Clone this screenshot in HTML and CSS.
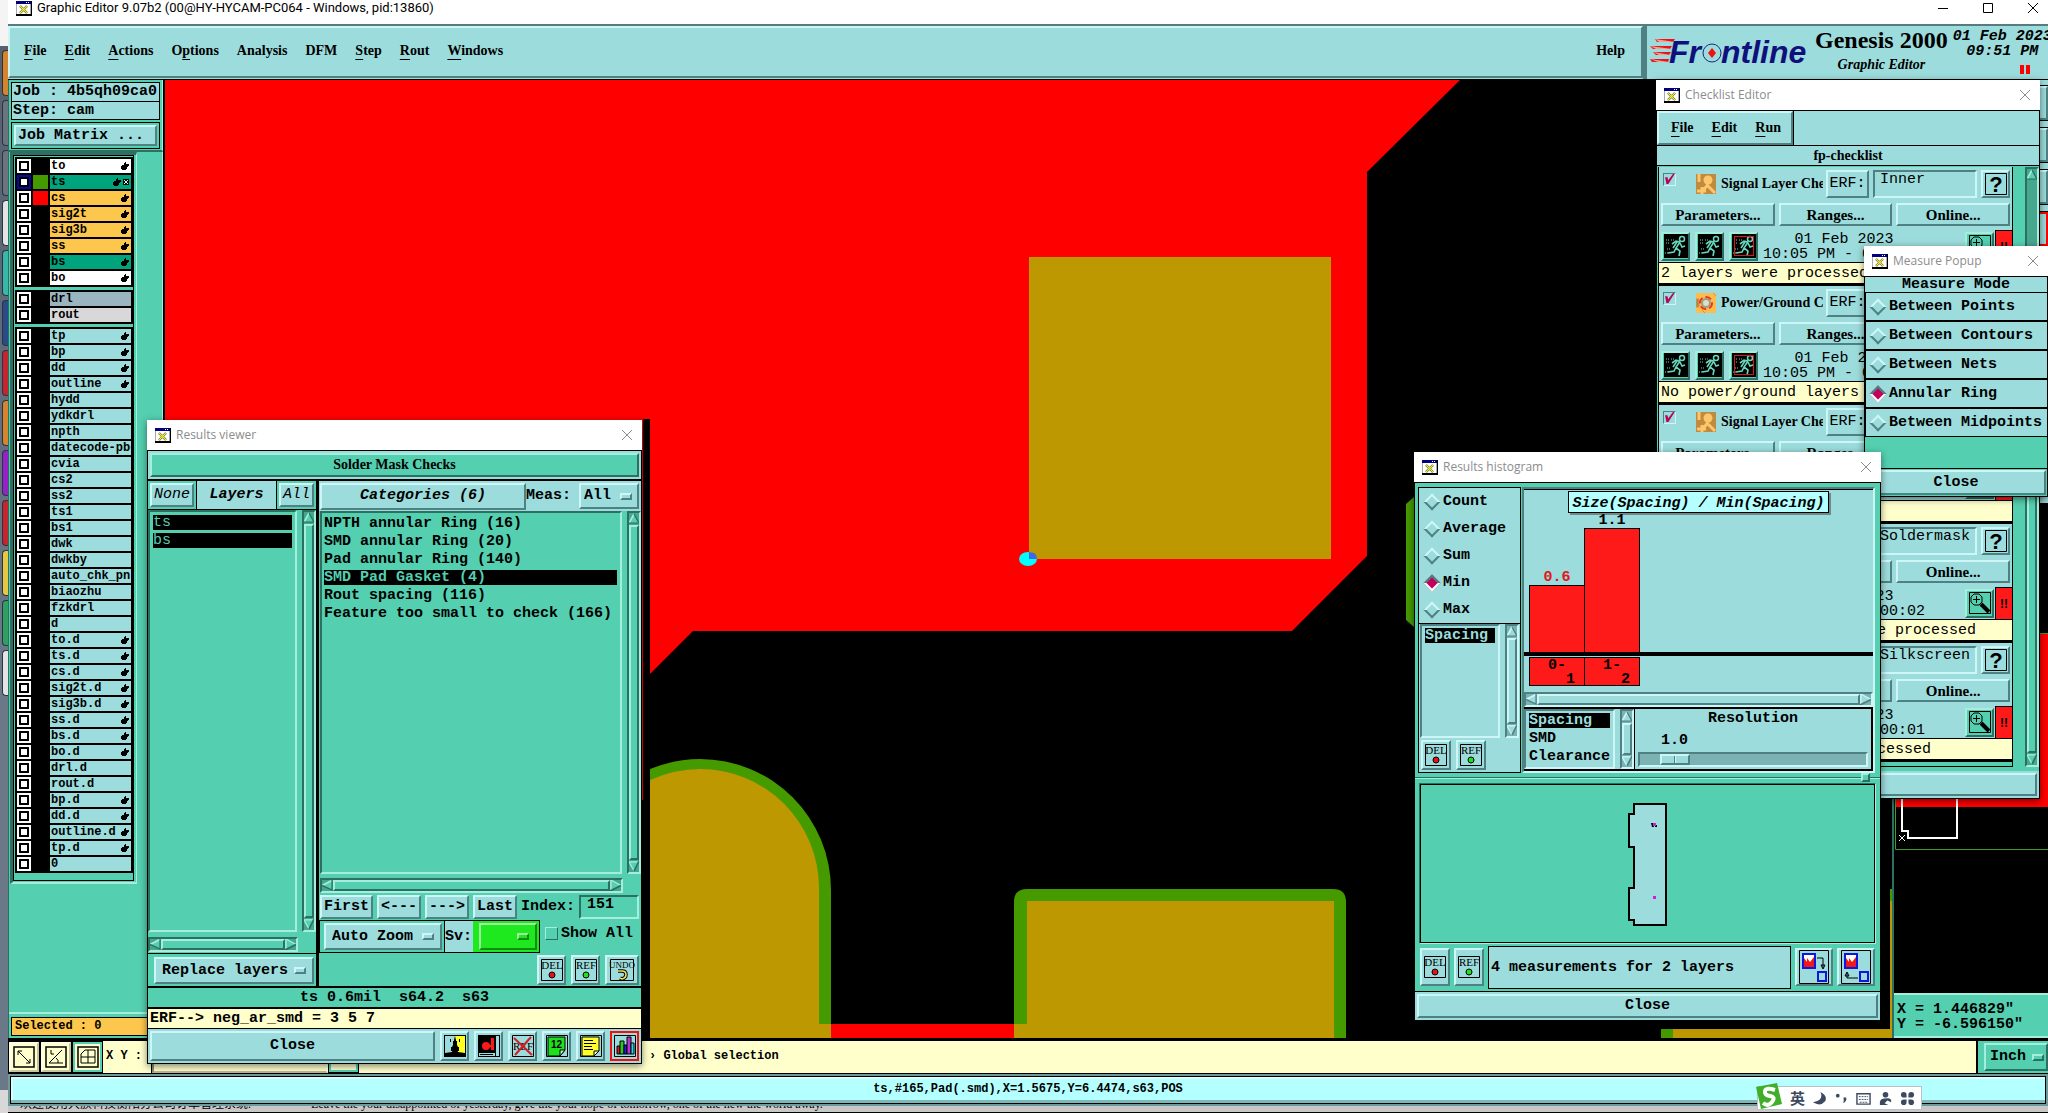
FILE: index.html
```html
<!DOCTYPE html>
<html lang="en">
<head>
	<meta charset="utf-8">
	<title>Graphic Editor</title>
	<link rel="stylesheet" href="styles.css">
</head>
<body>

<!-- shared icons -->
<svg class="defs">
	<symbol id="i-win" viewBox="0 0 16 15"><path d="M0 0h16v15H0z" fill="#000"/><path d="M0 0h15v13H0z" fill="#a8a8b0"/><path d="M1 3h13v10H1z" fill="#fff"/><path d="M0 0h15v3H0z" fill="#000080"/><path d="M10 1h1v1h-1zM12 1h1v1h-1z" fill="#fff"/><path d="M4 5l7 7M11 5l-7 7" stroke="#333" stroke-width="2.2"/><path d="M4 5l7 7M11 5l-7 7" stroke="#f2f22a" stroke-width="1.4"/></symbol>
	<symbol id="i-close" viewBox="0 0 12 12"><path d="M1 1l10 10M11 1L1 11" stroke="currentColor" fill="none"/></symbol>
	<symbol id="i-hand" viewBox="0 0 8 8"><path d="M4 0h1v2h3v2H7v1H6v2H5v1H1V7H0V4h1V3h2V1h1z"/></symbol>
	<symbol id="i-grid" viewBox="0 0 6 6"><path d="M0 0h6v6H0z"/><path d="M1 1h1v1H1zM4 1h1v1H4zM1 4h1v1H1zM4 4h1v1H4zM2 2h2v2H2z" fill="#cfe"/></symbol>
	<symbol id="i-up" viewBox="0 0 12 12"><path d="M6 0L12 12H0z" fill="var(--bg)"/><path d="M0 11L6 0" stroke="var(--hi)" stroke-width="2"/><path d="M6 0l6 11H0" stroke="var(--lo)" stroke-width="1.5" fill="none"/></symbol>
	<symbol id="i-down" viewBox="0 0 12 12"><path d="M0 0h12L6 12z" fill="var(--bg)"/><path d="M12 1H0l6 11" stroke="var(--hi)" stroke-width="1.5" fill="none"/><path d="M12 0L6 12" stroke="var(--lo)" stroke-width="2"/></symbol>
	<symbol id="i-left" viewBox="0 0 12 12"><path d="M12 0v12L0 6z" fill="var(--bg)"/><path d="M12 0L0 6" stroke="var(--hi)" stroke-width="2"/><path d="M0 6l11 5V0" stroke="var(--lo)" stroke-width="1.5" fill="none"/></symbol>
	<symbol id="i-right" viewBox="0 0 12 12"><path d="M0 0l12 6-12 6z" fill="var(--bg)"/><path d="M12 6L1 0v12" stroke="var(--hi)" stroke-width="1.5" fill="none"/><path d="M12 6L0 12" stroke="var(--lo)" stroke-width="2"/></symbol>
	<symbol id="i-del" viewBox="0 0 24 24"><path d="M1.500 1.500h21v21h-21z" fill="none" stroke="#000"/><text x="12" y="11" class="cap" text-anchor="middle">DEL</text><circle cx="12" cy="17" r="3" fill="#e8101c" stroke="#000"/></symbol>
	<symbol id="i-ref" viewBox="0 0 24 24"><path d="M1.500 1.500h21v21h-21z" fill="none" stroke="#000"/><text x="12" y="11" class="cap" text-anchor="middle">REF</text><circle cx="12" cy="17" r="3" fill="#1ee01e" stroke="#000"/></symbol>
	<symbol id="i-undo" viewBox="0 0 26 24"><path d="M1.500 1.500h23v21h-23z" fill="none" stroke="#000"/><text x="13" y="10" class="cap small" text-anchor="middle">UNDO</text><path d="M9 13h4q4 0 4 3.500t-4 4.500l-2-1" fill="none" stroke="#000" stroke-width="3.500"/><path d="M9 13h4q4 0 4 3.500t-4 4.500l-2-1" fill="none" stroke="#f0e060" stroke-width="1.600"/></symbol>
	<symbol id="i-face" viewBox="0 0 24 24"><path d="M1 1h22v22H1z" fill="#000"/><path d="M2 2h10l-1 4v3l-2 4 1 2-1 3-7 1z" fill="#9cdcdc"/><path d="M22 2H12l1 4v3l2 4-1 2 1 3 7 1z" fill="#ffff20"/><path d="M7 5h1v3H7zM16 5h1v3h-1zM10 7h4v6h2v4H8v-4h2z"/></symbol>
	<symbol id="i-dim" viewBox="0 0 24 24"><path d="M1 1h22v22H1z" fill="#000"/><path d="M2 19h16v3H2z" fill="#9cdcdc"/><path d="M19 2h3v20h-3z" fill="#9cdcdc"/><path d="M3 20.500h13" stroke="#000"/><circle cx="9" cy="12" r="4" fill="#ff1818"/><path d="M14 4h3v12h-3z" fill="#ff1818"/><path d="M10 11h4v2h-4z" fill="#ff1818"/></symbol>
	<symbol id="i-noref" viewBox="0 0 24 24"><path d="M1.500 1.500h21v21h-21z" fill="none" stroke="#000"/><text x="12" y="16" class="cap" text-anchor="middle">REF</text><path d="M3 4l18 17M20 3L4 21" stroke="#d41c24" stroke-width="2"/></symbol>
	<symbol id="i-num" viewBox="0 0 24 24"><path d="M1.500 1.500h21v21h-21z" fill="#9cdcdc" stroke="#000"/><path d="M3 3h17v13l-5 6H3z" fill="#1ee01e" stroke="#000"/><path d="M15 22v-6h5z" fill="#b8f8b8" stroke="#000"/><text x="6" y="14" class="num">12</text></symbol>
	<symbol id="i-note" viewBox="0 0 24 24"><path d="M1.500 1.500h21v21h-21z" fill="#9cdcdc" stroke="#000"/><path d="M3 3h17v14l-5 5H3z" fill="#ffff30" stroke="#000"/><path d="M15 22v-5h5z" fill="#ffffb0" stroke="#000"/><path d="M5 6.500h9M5 9.500h12M5 12.500h8M5 15.500h9" stroke="#000"/></symbol>
	<symbol id="i-hist" viewBox="0 0 24 24"><path d="M1.500 1.500h21v21h-21z" fill="#9cdcdc" stroke="#000"/><path d="M4 12h3v8H4z" fill="#e01818" stroke="#000"/><path d="M7 7h4v13H7z" fill="#28c828" stroke="#000"/><path d="M11 11h3v9h-3z" fill="#2020e0" stroke="#000"/><path d="M14 3h4v17h-4z" fill="#c030d0" stroke="#000"/><path d="M18 9h3v11h-3z" fill="#20d8e8" stroke="#000"/></symbol>
	<symbol id="i-run" viewBox="0 0 24 24"><path d="M0 0h24v24H0z" fill="#000"/><circle cx="18" cy="5" r="2.500" fill="none" stroke="#68d8bc" stroke-width="1.500"/><path d="M16 8l-4-1-4 3M16 8l-4 6 4 3-1 5M12 14l-2 4-6 1M16 9l2 4 3-1M13 8l-4 6" fill="none" stroke="#68d8bc" stroke-width="1.600"/><path d="M2 6h3M7 6h3M2 9h3M3 15h3M1 19h3" stroke="#68d8bc" stroke-dasharray="1 1"/></symbol>
	<symbol id="i-zoom" viewBox="0 0 24 24"><path d="M1.500 1.500h21v21h-21z" fill="#54cfb0" stroke="#000"/><path d="M6 3h5l3 3v5l-3 3H6l-3-3V6z" fill="none" stroke="#000"/><path d="M5 8.500h7M8.500 5v7" stroke="#000"/><path d="M13 13l8 8" stroke="#000" stroke-width="4"/></symbol>
	<symbol id="i-help" viewBox="0 0 24 24"><path d="M1.500 1.500h21v21h-21z" fill="none" stroke="#000"/><text x="12" y="20" class="q" text-anchor="middle">?</text></symbol>
	<symbol id="i-signal" viewBox="0 0 20 20"><path d="M0 0h20v20H0z" fill="#c08b3e"/><circle cx="12" cy="6" r="4.500" fill="#fdc66a"/><path d="M12 10l-2 3-3 3M12 12l7 7M3 0v8M6 13v7M1 17h9" stroke="#fdc66a" stroke-width="3" fill="none"/></symbol>
	<symbol id="i-power" viewBox="0 0 20 20"><path d="M0 0h20v20H0z" fill="#fdbb50"/><path d="M0 6h3v8H0zM17 0l3 3M6 17l3 3" fill="#a08868" stroke="#e09030"/><circle cx="10" cy="10" r="6" fill="none" stroke="#e83818" stroke-width="2" stroke-dasharray="6 3"/><circle cx="10" cy="10" r="4" fill="#e0dcc8" stroke="#98a088" stroke-width="2"/></symbol>
	<symbol id="i-tile" viewBox="0 0 30 34"><path d="M.5.5h29v33H.5z" fill="none" stroke="#000"/><path d="M4 4h12v14H4z" fill="#fff" stroke="#1414e0" stroke-width="2"/><path d="M5 8l3 4V8l3 4 4-5v10H5z" fill="#f01818"/><path d="M19 22h8v9h-8z" fill="none" stroke="#1414e0" stroke-width="2"/></symbol>
</svg>

<div class="strip">
	<span class="k-or"></span><span class="k-gr"></span><span class="k-gr"></span><span class="k-wh"></span><span class="k-te"></span><span class="k-bl"></span><span class="k-re"></span><span class="k-or"></span><span class="k-pu"></span><span class="k-re"></span><span class="k-ye"></span><span class="k-gn"></span><span class="k-wh"></span>
</div>

<div class="app">
	<header class="titlebar">
		<svg class="win-icon"><use href="#i-win"/></svg>
		<span>Graphic Editor 9.07b2 (00@HY-HYCAM-PC064 - Windows, pid:13860)</span>
		<span class="sysbuttons">
			<button aria-label="Minimize"><svg viewBox="0 0 12 12"><path d="M1 6.500h10" stroke="#000"/></svg></button>
			<button aria-label="Maximize"><svg viewBox="0 0 12 12"><path d="M1.500 1.500h9v9h-9z" stroke="#000" fill="none"/></svg></button>
			<button aria-label="Close"><svg viewBox="0 0 12 12"><use href="#i-close"/></svg></button>
		</span>
	</header>

	<div class="topbar blue">
		<nav class="menu">
			<button><u>F</u>ile</button><button><u>E</u>dit</button><button><u>A</u>ctions</button><button>O<u>p</u>tions</button><button>Analysis</button><button>DFM</button><button><u>S</u>tep</button><button><u>R</u>out</button><button><u>W</u>indows</button>
			<button class="help">Help</button>
		</nav>
		<div class="brand">
			<svg class="logo" viewBox="0 0 160 34">
				<path d="M5 6h20l-2 3H7zM0 13h22l-2 3H3zM3 19h18l-2 3H6zM0 26h19l-1 3H2z" fill="#e8141c"/>
				<path d="M5 6l20 3H9zM0 13l22 3H6zM3 19l18 3H9zM0 26l19 3H8z" fill="#f8a090"/>
				<g class="logo-text"><text x="19" y="30">Fr</text><text x="71" y="30">ntline</text></g>
				<circle cx="62" cy="20" r="9" fill="none" stroke="#182a80"/>
				<path d="M62 15l4 5-4 5-4-5z" fill="#f01010"/>
			</svg>
			<div class="product"><b>Genesis 2000</b><i>Graphic Editor</i></div>
			<div class="clock"><span>01 Feb 2023</span><span>09:51 PM</span><span class="pause"></span></div>
		</div>
	</div>

	<div class="workspace">
		<aside class="side green">
			<div class="jobinfo">
				<div class="job blue">Job : 4b5qh09ca0</div>
				<div class="job blue">Step: cam</div>
				<div class="matrix"><button class="btn blue">Job Matrix ...</button></div>
			</div>
			<div class="layerpane"><div class="layers" id="layers"></div></div>
			<div class="selected">Selected : 0</div>
		</aside>

		<main class="canvas">
			<svg viewBox="0 0 1727 958" preserveAspectRatio="xMinYMin slice">
				<path d="M0 0H1295L1202 92V476L1127 551H528L485 594V720H0z" fill="#f00"/>
				<path d="M478 339h7v620h-7z" fill="#000"/>
				<path d="M864 177h302v302H864z" fill="#be9800"/>
				<ellipse cx="863" cy="479" rx="9" ry="7" fill="#0ff"/><path d="M864 479v-7q8 0 8 7z" fill="#4169e1"/>
				<path d="M485 689Q510 679 535 679A131 131 0 0 1 666 810V944H485z" fill="#459a00"/>
				<path d="M485 700Q510 689 535 689A119 119 0 0 1 654 808V944H666V958H485z" fill="#be9800"/>
				<path d="M666 944h183v14H666z" fill="#f00"/>
				<path d="M849 958V822q0-13 13-13h306q13 0 13 13v136z" fill="#459a00"/>
				<path d="M862 821h307v137H849v-14h13z" fill="#be9800"/>
				<path d="M1241 424l8-7v130l-8-7z" fill="#459a00"/>
				<path d="M1496 949h12v9h-12zM1725 809h2v12h-2z" fill="#459a00"/>
				<path d="M1508 949h217V821h2v137h-219z" fill="#be9800"/>
			</svg>
		</main>

		<aside class="tools">
			<div class="toolbox blue"><button class="btn" aria-label="Zoom in"></button><button class="btn" aria-label="Zoom out"></button><button class="btn" aria-label="Pan"></button><button class="btn hot" aria-label="Stop"></button><button class="btn" aria-label="Snap"></button></div>
			<svg class="overview" viewBox="0 0 154 490" preserveAspectRatio="xMinYMax slice">
				<path d="M0 0h154v490H0z"/><path d="M2 130h152v174H2z" fill="#f00"/>
				<path d="M154 130.500H1.500V346.500H154" fill="none" stroke="#3f9a28"/>
				<path d="M8 240v88h6v7h49v-95" fill="none" stroke="#fff" stroke-width="2"/>
				<path d="M5 332l6 6M11 332l-6 6" stroke="#fff"/>
			</svg>
			<div class="coords green"><span>X = 1.446829"</span><span>Y = -6.596150"</span></div>
		</aside>
	</div>

	<div class="cmdbar">
		<button class="tool" aria-label="Distance"><svg viewBox="0 0 22 22"><path d="M1 1h20v20H1z" fill="none" stroke="#000" stroke-width="1.500"/><path d="M5 5l12 12M5 9V5h4M17 13v4h-4" stroke="#000" fill="none"/></svg></button>
		<button class="tool" aria-label="Angle"><svg viewBox="0 0 22 22"><path d="M1 1h20v20H1z" fill="none" stroke="#000" stroke-width="1.500"/><path d="M17 4L4 17h14M6 4v4h3M11 12q3 2 2 5" stroke="#000" fill="none"/></svg></button>
		<button class="tool on" aria-label="Grid"><svg viewBox="0 0 22 22"><path d="M1 1h20v20H1z" fill="none" stroke="#000" stroke-width="1.500"/><path d="M4 17V8l4-4h10v13zM4 11h14M11 4v13" stroke="#000" fill="none"/></svg></button>
		<label for="xy">X Y :</label>
		<input id="xy" type="text">
		<button class="tool on" aria-label="Go"></button>
		<span class="hint">› Global selection</span>
		<span class="units green"><span class="opt"><select aria-label="Units"><option>Inch</option></select></span></span>
	</div>
	<div class="statusbar"><p>ts,#165,Pad(.smd),X=1.5675,Y=6.4474,s63,POS</p></div>
	<div class="behind"><span>欢迎使用大族科技衡阳分公司订单管理系统.</span><span>Leave the your disappointed of yesterday, give the your hope of tomorrow, one of the new the world away.</span></div>
</div>

<!-- results viewer -->
<section class="win viewer">
	<div class="wintitle"><svg class="win-icon"><use href="#i-win"/></svg><span>Results viewer</span><button aria-label="Close"><svg><use href="#i-close"/></svg></button></div>
	<div class="winbody green">
		<div class="checkname blue"><div class="btn green">Solder Mask Checks</div></div>
		<div class="panes">
			<div class="pane-l">
				<div class="lhead"><span><button class="btn blue">None</button></span><b class="blue">Layers</b><span><button class="btn blue">All</button></span></div>
				<div class="listrow">
					<ul class="list narrow"><li class="sel">ts</li><li class="sel">bs</li></ul>
					<div class="vbar"><svg><use href="#i-up"/></svg><i></i><svg><use href="#i-down"/></svg></div>
				</div>
				<div class="hbar"><svg><use href="#i-left"/></svg><i></i><svg><use href="#i-right"/></svg></div>
				<div class="replace"><span class="opt blue"><select aria-label="Replace mode"><option>Replace layers</option></select></span></div>
			</div>
			<div class="pane-r">
				<div class="rhead blue"><button class="btn">Categories (6)</button><label for="meas">Meas:</label><span class="opt"><select id="meas"><option>All</option></select></span></div>
				<div class="listrow">
					<ul class="list"><li>NPTH annular Ring (16)</li><li>SMD annular Ring (20)</li><li>Pad annular Ring (140)</li><li class="sel">SMD Pad Gasket (4)</li><li>Rout spacing (116)</li><li>Feature too small to check (166)</li></ul>
					<div class="vbar"><svg><use href="#i-up"/></svg><i></i><svg><use href="#i-down"/></svg></div>
				</div>
				<div class="hbar"><svg><use href="#i-left"/></svg><i></i><svg><use href="#i-right"/></svg></div>
				<div class="navrow"><button class="btn blue first">First</button><button class="btn blue">&lt;---</button><button class="btn blue">---&gt;</button><button class="btn blue">Last</button><label for="idx">Index:</label><input id="idx" type="text" value="151"></div>
				<div class="zoomrow">
					<div class="zoombox"><span class="opt blue"><select aria-label="Zoom mode"><option>Auto Zoom</option></select></span><label class="blue" for="sv">Sv:</label><div class="svbox"><span class="opt"><select id="sv"><option></option></select></span></div></div>
					<label class="showall"><input type="checkbox">Show All</label>
				</div>
				<div class="iconrow blue"><button class="btn" aria-label="Delete"><svg><use href="#i-del"/></svg></button><button class="btn" aria-label="Reference"><svg><use href="#i-ref"/></svg></button><button class="btn" aria-label="Undo"><svg class="wide"><use href="#i-undo"/></svg></button></div>
			</div>
		</div>
		<div class="measline"><pre>ts 0.6mil  s64.2  s63</pre></div>
		<div class="erfline">ERF--&gt; neg_ar_smd = 3 5 7</div>
		<div class="footer blue">
			<button class="btn grow">Close</button>
			<button class="btn" aria-label="Compare"><svg><use href="#i-face"/></svg></button><button class="btn" aria-label="Measure"><svg><use href="#i-dim"/></svg></button><button class="btn" aria-label="No reference"><svg><use href="#i-noref"/></svg></button><button class="btn" aria-label="Numbers"><svg><use href="#i-num"/></svg></button><button class="btn" aria-label="Notes"><svg><use href="#i-note"/></svg></button><button class="btn hot" aria-label="Histogram"><svg><use href="#i-hist"/></svg></button>
		</div>
	</div>
</section>

<!-- checklist editor -->
<section class="win checklist">
	<div class="wintitle"><svg class="win-icon"><use href="#i-win"/></svg><span>Checklist Editor</span><button aria-label="Close"><svg><use href="#i-close"/></svg></button></div>
	<div class="winbody blue">
		<nav class="menu"><button><u>F</u>ile</button><button><u>E</u>dit</button><button><u>R</u>un</button></nav>
		<h2>fp-checklist</h2>
		<div class="checks green">
			<div class="checkitems blue" id="checks"></div>
			<div class="vbar green"><svg><use href="#i-up"/></svg><i></i><svg><use href="#i-down"/></svg></div>
		</div>
		<div class="footer"><button class="btn grow" aria-label="Close"></button></div>
	</div>
</section>

<!-- measure popup -->
<section class="win measure">
	<div class="wintitle"><svg class="win-icon"><use href="#i-win"/></svg><span>Measure Popup</span><button aria-label="Close"><svg><use href="#i-close"/></svg></button></div>
	<div class="winbody green">
		<div class="modes blue">
			<h3>Measure Mode</h3>
			<label><input type="radio" name="mode">Between Points</label>
			<label><input type="radio" name="mode">Between Contours</label>
			<label><input type="radio" name="mode">Between Nets</label>
			<label><input type="radio" name="mode" checked>Annular Ring</label>
			<label><input type="radio" name="mode">Between Midpoints</label>
		</div>
		<div class="popclose"><button class="btn blue">Close</button></div>
	</div>
</section>

<!-- results histogram -->
<section class="win histogram">
	<div class="wintitle"><svg class="win-icon"><use href="#i-win"/></svg><span>Results histogram</span><button aria-label="Close"><svg><use href="#i-close"/></svg></button></div>
	<div class="winbody green">
		<div class="hmain">
			<div class="stats blue">
				<div class="radios">
					<label><input type="radio" name="stat">Count</label>
					<label><input type="radio" name="stat">Average</label>
					<label><input type="radio" name="stat">Sum</label>
					<label><input type="radio" name="stat" checked>Min</label>
					<label><input type="radio" name="stat">Max</label>
				</div>
				<div class="listrow"><ul class="list"><li class="sel">Spacing</li></ul><div class="vbar"><svg><use href="#i-up"/></svg><i></i><svg><use href="#i-down"/></svg></div></div>
				<div class="iconrow"><button class="btn" aria-label="Delete"><svg><use href="#i-del"/></svg></button><button class="btn" aria-label="Reference"><svg><use href="#i-ref"/></svg></button></div>
			</div>
			<div class="chartpane blue">
				<div class="plot">
					<div class="charttitle">Size(Spacing) / Min(Spacing)</div>
					<div class="bars"><div class="bar low" style="height:67px"><span>0.6</span></div><div class="bar" style="height:124px"><span>1.1</span></div></div>
				</div>
				<div class="ticks"><pre>0-
  1</pre><pre>1-
  2</pre></div>
				<div class="hbar"><svg><use href="#i-left"/></svg><i></i><svg><use href="#i-right"/></svg></div>
				<div class="chartfoot">
					<div class="listrow"><ul class="list"><li class="sel">Spacing</li><li>SMD</li><li>Clearance</li></ul><div class="vbar"><svg><use href="#i-up"/></svg><i></i><svg><use href="#i-down"/></svg></div></div>
					<div class="resolution"><label for="res">Resolution</label><output for="res">1.0</output><input id="res" type="range" min="0" max="10" value="1"></div>
				</div>
			</div>
		</div>
		<div class="sash"><i></i></div>
		<div class="board">
			<svg viewBox="0 0 40 123"><path d="M6 1h32v121H6v-5H1V85h5V44H1V11h5z" fill="#9cdcdc" stroke="#000" stroke-width="2"/><path d="M23 20h3v4h-2zM27 22h2v2h-2z"/><path d="M25 20h3v3h-3z" fill="#d020d0"/><path d="M25 93h3v3h-3z" fill="#d020d0"/></svg>
		</div>
		<div class="boardfoot blue">
			<button class="btn" aria-label="Delete"><svg><use href="#i-del"/></svg></button>
			<button class="btn" aria-label="Reference"><svg><use href="#i-ref"/></svg></button>
			<div class="summary">4 measurements for 2 layers</div>
			<button class="btn" aria-label="Send down"><svg class="tile" viewBox="0 0 30 34"><use href="#i-tile"/><path d="M18 8h6v10M22 15l2 4 2-4z" fill="none" stroke="#000"/></svg></button>
			<button class="btn" aria-label="Send back"><svg class="tile" viewBox="0 0 30 34"><use href="#i-tile"/><path d="M17 28H6v-5M4 26l2-4 2 4z" fill="none" stroke="#000"/></svg></button>
		</div>
		<div class="footer blue"><button class="btn grow">Close</button></div>
	</div>
</section>

<!-- input method bar -->
<div class="ime">
	<svg class="sogou" viewBox="0 0 28 28"><path d="M1 5L22 1l5 21L6 27z" fill="#3fae29"/><path d="M20 8q-9-3-10 1t5 5 2 6-9 1" fill="none" stroke="#fff" stroke-width="4"/></svg>
	<span>英</span>
	<svg viewBox="0 0 16 16"><path d="M9 1q4 9-8 11 8 5 13-1 3-6-5-10z"/></svg>
	<svg viewBox="0 0 16 16"><circle cx="4" cy="5" r="2"/><path d="M10 7h3q1 4-3 6 1-3 0-6z"/></svg>
	<svg viewBox="0 0 16 16"><path d="M1 3h14v11H1z" fill="none" stroke="#3c4a60" stroke-width="1.500"/><path d="M3 6h10M3 9h10M4 12h8" stroke="#3c4a60" stroke-dasharray="2 1"/></svg>
	<svg viewBox="0 0 16 16"><circle cx="8" cy="4" r="3"/><path d="M2 15q-1-8 6-7 7-1 6 4l-4-2-3 3 4 2z"/></svg>
	<svg viewBox="0 0 16 16"><path d="M1 4q0-3 3-3t3 3v3H4Q1 7 1 4zM9 7V4q0-3 3-3t3 3-3 3zM1 12q0-3 3-3h3v3q0 3-3 3t-3-3zM9 9h3q3 0 3 3t-3 3-3-3z"/></svg>
</div>

<script src="script.js"></script>
</body>
</html>
```

FILE: styles.css
```css
*, *::before, *::after {
	box-sizing: border-box;
}
html, body {
	height: 100%;
	margin: 0;
	overflow: hidden;
}
body {
	display: flex;
	position: relative;
	background: #6b7888;
	color: #000;
	font: bold 15px/18px "Liberation Mono", monospace;
}
button, input, select {
	font: inherit;
	color: inherit;
	margin: 0;
	padding: 0;
	border: 0;
	background: none;
	appearance: none;
	border-radius: 0;
}
svg {
	display: block;
}
h2, h3, p, pre, ul {
	margin: 0;
	padding: 0;
	font: inherit;
}
ul {
	list-style: none;
}
.defs {
	display: none;
}
.cap {
	font: 11px "Liberation Serif", serif;
}
.cap.small {
	font-size: 9px;
}
.num {
	font: bold 10px "Liberation Sans", sans-serif;
}
.q {
	font: bold 22px "Liberation Sans", sans-serif;
}

/* motif palettes */
.blue {
	--bg: #9cdcdc;
	--hi: #cdf6f6;
	--lo: #4f8082;
	--tr: #7cb2b3;
	background-color: #9cdcdc;
}
.green {
	--bg: #54cfb0;
	--hi: #a4eedb;
	--lo: #2b7060;
	--tr: #46a68e;
	background-color: #54cfb0;
}
.btn {
	display: flex;
	align-items: center;
	justify-content: center;
	background: var(--bg);
	border: 2px solid;
	border-color: var(--hi) var(--lo) var(--lo) var(--hi);
	white-space: nowrap;
}
.btn svg {
	width: 24px;
	height: 24px;
	flex: none;
}

/* strip of icons at the screen edge */
.strip {
	flex: 0 0 8px;
	display: flex;
	flex-direction: column;
	gap: 4px;
	padding: 50px 0 0 2px;
	background: linear-gradient(#f4f4f4 46px, #56616e 46px, #6b7888 60%, #6b7888 1090px, #d8d8d8 1090px);
}
.strip span {
	height: 46px;
	border: 1px solid #2b3440;
	border-right: 0;
	border-radius: 4px 0 0 4px;
}
.k-or { background: #d8842c; }
.k-gr { background: #6c7480; }
.k-wh { background: #e4e4e4; }
.k-te { background: #38b8a8; }
.k-bl { background: #2c4a88; }
.k-re { background: #c82430; }
.k-pu { background: #9820c8; }
.k-ye { background: #e8c840; }
.k-gn { background: #30a060; }

.app {
	flex: 1;
	min-width: 0;
	display: flex;
	flex-direction: column;
	overflow: hidden;
}
.titlebar {
	flex: 0 0 24px;
	display: flex;
	align-items: center;
	gap: 5px;
	padding: 0 9px 8px 8px;
	background: #fff;
	font: 13px/16px Roboto, sans-serif;
}
.win-icon {
	width: 16px;
	height: 15px;
	flex: none;
}
.sysbuttons {
	display: flex;
	gap: 33px;
	margin-left: auto;
}
.sysbuttons svg {
	width: 12px;
	height: 12px;
}
.topbar {
	flex: 0 0 56px;
	display: flex;
	border-top: 2px solid #567c7e;
	border-bottom: 1px solid #000;
}
.menu {
	display: flex;
	align-items: center;
	gap: 18px;
	font: bold 14px/18px "Liberation Serif", serif;
}
.menu u {
	text-decoration: underline;
	text-underline-offset: 4px;
}
.topbar .menu {
	flex: 1;
	padding: 0 16px 2px 14px;
	border: 2px solid;
	border-color: var(--hi) var(--lo) var(--lo) var(--hi);
	margin-bottom: 1px;
}
.topbar .help {
	margin-left: auto;
}
.brand {
	flex: 0 0 405px;
	display: flex;
	gap: 5px;
	padding: 2px 0 0 3px;
	border-left: 4px solid var(--lo);
	overflow: hidden;
}
.logo {
	width: 160px;
	height: 34px;
	margin-top: 5px;
	flex: none;
}
.logo-text {
	font: italic bold 32px "Liberation Sans", sans-serif;
	fill: #10107c;
}
.product {
	display: flex;
	flex-direction: column;
	align-items: center;
	font: bold 24px/24px "Liberation Serif", serif;
	white-space: nowrap;
}
.product i {
	font-size: 14px;
	line-height: 26px;
}
.clock {
	display: flex;
	flex-direction: column;
	flex: none;
	align-items: center;
	padding-top: 1px;
	font: italic bold 15px/15px "Liberation Mono", monospace;
}
.pause {
	width: 10px;
	height: 9px;
	margin: 6px 0 0 46px;
	border: solid #f00;
	border-width: 0 4px;
}

.workspace {
	flex: 1;
	min-height: 0;
	display: flex;
	border-bottom: 3px solid #000;
}
.side {
	flex: 0 0 157px;
	display: flex;
	flex-direction: column;
	border-right: 2px solid #000;
	border-left: 1px solid #2b7060;
}
.jobinfo {
	padding: 2px 2px 1px;
	border-right: 1px solid var(--hi);
	border-bottom: 2px solid var(--lo);
}
.job {
	height: 20px;
	padding-left: 1px;
	border: 1px solid #000;
	white-space: nowrap;
	overflow: hidden;
}
.job + .job {
	height: 19px;
	margin-top: -1px;
}
.matrix {
	margin-top: 2px;
	padding: 2px;
	border: 1px solid #000;
}
.matrix .btn {
	width: 100%;
	height: 21px;
	justify-content: flex-start;
	padding-left: 2px;
}
.layerpane {
	flex: 1;
	min-height: 0;
	padding-left: 1px;
	border-right: 1px solid var(--hi);
	border-bottom: 2px solid var(--hi);
}
.layers {
	width: 127px;
	display: flex;
	flex-direction: column;
	gap: 3px;
	padding: 2px 3px 9px 2px;
	border: solid;
	border-width: 3px 1px 2px 3px;
	border-color: var(--lo) var(--hi) var(--hi) var(--lo);
	outline: 1px solid #000;
	outline-offset: -4px;
}
.group {
	display: flex;
	flex-direction: column;
	gap: 2px;
	padding: 2px;
	background: #000;
}
.layer {
	display: flex;
	gap: 2px;
	height: 14px;
	font: bold 12px/14px "Liberation Mono", monospace;
}
.layer input {
	width: 14px;
	height: 14px;
	background: #fff;
	border: 3px solid #fff;
	outline: 2px solid #000;
	outline-offset: -4px;
}
.layer input:checked {
	border-color: #0808a0;
}
.swatch {
	width: 15px;
}
.lname {
	flex: 1;
	min-width: 0;
	display: flex;
	align-items: center;
	padding-left: 1px;
	overflow: hidden;
	white-space: nowrap;
	background: #9cdcdc;
}
.lname span {
	flex: 1;
	min-width: 0;
}
.lname svg {
	width: 8px;
	height: 8px;
	margin-right: 2px;
	flex: none;
}
.lname .g {
	width: 6px;
	height: 6px;
}
.c-wh { background: #fff; }
.c-gr { background: #00a47c; }
.c-or { background: #fdc64c; }
.c-dr { background: #9ab4c0; }
.c-ro { background: #d8d8d8; }
.selected {
	height: 19px;
	margin: 3px 0 2px 2px;
	padding-left: 3px;
	border: 1px solid #000;
	background: #fdc64c;
	font: bold 12px/17px "Liberation Mono", monospace;
}
.canvas {
	flex: 1;
	min-width: 0;
	background: #000;
}
.canvas svg {
	width: 100%;
	height: 100%;
}
.tools {
	flex: 0 0 156px;
	display: flex;
	flex-direction: column;
	border-left: 2px solid #2b7060;
}
.toolbox {
	flex: 0 0 423px;
	display: flex;
	flex-direction: column;
	align-items: flex-end;
	gap: 8px;
	padding-top: 6px;
}
.toolbox .btn {
	width: 40px;
	height: 34px;
	outline: 1px solid #000;
}
.toolbox .hot {
	border-color: #f00;
}
.overview {
	flex: 1;
	min-height: 0;
	width: 100%;
}
.coords {
	flex: 0 0 45px;
	display: flex;
	flex-direction: column;
	padding: 7px 0 0 3px;
	border-top: 2px solid var(--hi);
	border-bottom: 2px solid var(--hi);
	line-height: 15px;
}

.cmdbar {
	flex: 0 0 33px;
	display: flex;
	align-items: stretch;
	background: #ffffcc;
	border-bottom: 1px solid #000;
	font: bold 12px/18px "Liberation Mono", monospace;
}
.tool {
	width: 32px;
	display: flex;
	align-items: center;
	justify-content: center;
	background: #ffffcc;
	border: 3px solid #d2d0a4;
	border-color: #ffffe8 #c8c69c #c8c69c #ffffe8;
	outline: 1px solid #000;
	outline-offset: -1px;
}
.tool.on {
	width: 31px;
	border: 3px solid #54cfb0;
}
.tool svg {
	width: 22px;
	height: 22px;
}
.cmdbar label, .hint {
	line-height: 30px;
}
.cmdbar label {
	padding: 0 10px 0 3px;
}
.cmdbar input {
	width: 176px;
	border: 2px solid;
	border-color: #8c8c70 #ffffe8 #b8b690 #8c8c70;
	outline: 1px solid #000;
}
.hint {
	padding-left: 290px;
}
.units {
	width: 72px;
	margin-left: auto;
	padding: 2px 0 2px 6px;
	border-left: 2px solid #000;
	font-size: 15px;
}
.units .opt {
	padding: 0 2px 0 4px;
}
.opt {
	display: flex;
	align-items: center;
	height: 100%;
	padding: 0 6px;
	background: var(--bg);
	border: 2px solid;
	border-color: var(--hi) var(--lo) var(--lo) var(--hi);
}
.opt select {
	flex: 1;
	min-width: 0;
	line-height: 18px;
}
.opt::after {
	content: "";
	width: 12px;
	height: 7px;
	border: 2px solid;
	border-color: var(--hi) var(--lo) var(--lo) var(--hi);
}
.statusbar {
	flex: 0 0 32px;
	padding: 2px;
	background: #6f9a9c;
}
.statusbar p {
	height: 28px;
	background: #b4ffff;
	border: 1px solid #000;
	box-shadow: inset 0 -3px 0 #7cb8b8, inset 2px 2px 0 #dcffff;
	font: bold 12px/25px "Liberation Mono", monospace;
	text-align: center;
}
.behind {
	flex: 0 0 7px;
	display: flex;
	align-items: flex-end;
	gap: 60px;
	padding: 0 12px 2px;
	overflow: hidden;
	background: #c8c8c8;
	border-bottom: 1px solid #000;
	font: 12px/12px "Liberation Serif", "Noto Sans CJK SC", serif;
	white-space: nowrap;
}

/* floating windows */
.win {
	position: absolute;
	display: flex;
	flex-direction: column;
	box-shadow: 0 2px 7px rgba(0, 0, 0, 0.5);
}
.wintitle {
	flex: 0 0 30px;
	display: flex;
	align-items: center;
	gap: 5px;
	padding: 0 9px 0 8px;
	background: #fff;
	color: #8c8c8c;
	font: 12px/16px "Open Sans", sans-serif;
}
.wintitle button {
	margin-left: auto;
}
.wintitle button svg {
	width: 12px;
	height: 12px;
}
.winbody {
	flex: 1;
	min-height: 0;
	display: flex;
	flex-direction: column;
	border: 1px solid #000;
}
.footer {
	display: flex;
	gap: 5px;
	padding: 2px;
}
.grow {
	flex: 1;
}

/* lists and scroll bars */
.listrow {
	flex: 1;
	min-height: 0;
	display: flex;
	gap: 5px;
}
.list {
	flex: 1;
	min-width: 0;
	display: flex;
	flex-direction: column;
	gap: 3px;
	padding: 3px;
	border: 2px solid;
	border-color: var(--lo) var(--hi) var(--hi) var(--lo);
	overflow: hidden;
}
.list li {
	height: 15px;
	line-height: 15px;
	white-space: nowrap;
}
.list .sel {
	background: #000;
	color: var(--bg);
}
.list.narrow .sel {
	font-weight: normal;
}
.vbar, .hbar {
	display: flex;
	flex: none;
	border: 2px solid;
	border-color: var(--lo) var(--hi) var(--hi) var(--lo);
	background: var(--tr);
}
.vbar {
	flex-direction: column;
	width: 14px;
}
.hbar {
	height: 15px;
}
.hbar svg {
	width: 11px;
	height: 11px;
	flex: none;
}
.vbar svg {
	width: 10px;
	height: 12px;
	flex: none;
}
.vbar i, .hbar i {
	flex: 1;
	background: var(--bg);
	border: 2px solid;
	border-color: var(--hi) var(--lo) var(--lo) var(--hi);
}

/* results viewer */
.viewer {
	left: 147px;
	top: 420px;
	width: 495px;
	height: 644px;
}
.checkname {
	padding: 2px;
	border-bottom: 2px solid #000;
}
.checkname .btn {
	height: 24px;
	font: bold 14px/18px "Liberation Serif", serif;
}
.panes {
	flex: 1;
	min-height: 0;
	display: flex;
}
.pane-l {
	flex: 0 0 171px;
	display: flex;
	flex-direction: column;
	border-right: 3px solid #000;
}
.lhead {
	display: flex;
	height: 29px;
	border-bottom: 1px solid #000;
	font-style: italic;
}
.lhead span {
	padding: 2px;
}
.lhead .btn {
	height: 24px;
	padding: 0 2px;
	font-weight: normal;
	font-style: italic;
}
.lhead b {
	flex: 1;
	border: solid #000;
	border-width: 0 1px;
	line-height: 28px;
	text-align: center;
}
.pane-l .hbar {
	margin: 5px 18px 1px 0;
}
.replace {
	height: 33px;
	padding: 3px 2px 2px 6px;
	border-top: 1px solid #000;
}
.pane-r {
	flex: 1;
	min-width: 0;
	display: flex;
	flex-direction: column;
}
.pane-r .listrow, .pane-r .hbar, .pane-r .navrow {
	margin-left: 1px;
}
.rhead {
	display: flex;
	align-items: center;
	height: 30px;
	padding: 1px 2px 1px 1px;
}
.rhead .btn {
	width: 206px;
	height: 27px;
	font-style: italic;
}
.rhead .opt {
	flex: 1;
	height: 26px;
	margin-left: 8px;
	padding: 0 5px 0 3px;
}
.pane-r .list {
	padding-left: 2px;
}
.pane-r .hbar {
	margin: 4px 18px 1px 1px;
}
.navrow {
	display: flex;
	gap: 4px;
	height: 26px;
	padding: 1px 2px 1px 0;
}
.navrow .btn {
	width: 44px;
}
.navrow .first {
	width: 53px;
}
.navrow label {
	line-height: 24px;
}
.navrow input {
	flex: 1;
	min-width: 0;
	padding: 0 6px 4px;
	border: 2px solid;
	border-color: var(--lo) var(--hi) var(--hi) var(--lo);
}
.zoomrow {
	display: flex;
	gap: 5px;
	height: 33px;
}
.zoombox {
	display: flex;
	width: 221px;
	border: 1px solid #000;
}
.zoombox > .opt {
	flex: 0 0 118px;
	height: 27px;
	margin: 2px 2px 2px 4px;
}
.zoombox label {
	padding-right: 1px;
	border-left: 1px solid #000;
	line-height: 31px;
}
.svbox {
	--bg: #1ee81e;
	--hi: #a0f0a0;
	--lo: #148c14;
	flex: 1;
	padding: 2px 2px 2px 6px;
	background: #1ee81e;
}
.showall {
	display: flex;
	gap: 3px;
	padding-top: 5px;
}
.showall input {
	width: 13px;
	height: 13px;
	margin-top: 2px;
	border: 1px solid;
	border-color: var(--hi) var(--lo) var(--lo) var(--hi);
}
.iconrow {
	display: flex;
	gap: 5px;
	padding: 2px;
}
.iconrow .btn {
	width: 29px;
	height: 30px;
}
.pane-r .iconrow {
	justify-content: flex-end;
	height: 33px;
	background: none;
}
.pane-r .iconrow .btn:last-child {
	width: 34px;
}
.btn svg.wide {
	width: 26px;
}
.measline {
	height: 21px;
	border-top: 2px solid #000;
	line-height: 19px;
	text-align: center;
}
.erfline {
	height: 22px;
	padding-left: 2px;
	background: #ffffcc;
	border: solid #000;
	border-width: 2px 0 1px;
	line-height: 20px;
}
.viewer .footer .btn {
	height: 30px;
	min-width: 29px;
}
.viewer .footer .hot {
	border-color: #f01010;
}

/* checklist editor */
.checklist {
	right: 8px;
	top: 80px;
	width: 384px;
	height: 719px;
}
.checklist .menu {
	align-self: flex-start;
	height: 34px;
	padding: 0 10px 0 12px;
	border: 2px solid;
	border-color: var(--hi) var(--lo) var(--lo) var(--hi);
	outline: 1px solid #000;
}
.checklist h2 {
	height: 21px;
	border: solid #000;
	border-width: 1px 0;
	font: bold 14px/19px "Liberation Serif", serif;
	text-align: center;
}
.checks {
	flex: 1;
	min-height: 0;
	display: flex;
	gap: 12px;
	padding: 1px 0 4px 1px;
}
.checkitems {
	flex: 1;
	min-width: 0;
	border: 1px solid #000;
	border-top: 0;
	background: #54cfb0;
	overflow: hidden;
}
.check {
	padding-top: 1px;
	background: #9cdcdc;
}
.crow {
	display: flex;
	align-items: center;
	height: 31px;
	padding: 0 2px;
	font: 15px/18px "Liberation Mono", monospace;
}
.crow input[type=checkbox] {
	width: 13px;
	height: 13px;
	margin: 0 20px 9px 2px;
	border: 1px solid;
	border-color: var(--lo) var(--hi) var(--hi) var(--lo);
}
.crow input:checked::before {
	content: "";
	display: block;
	width: 11px;
	height: 11px;
	background: #b8005c;
	clip-path: polygon(10% 35%, 32% 35%, 38% 62%, 85% 0, 100% 0, 40% 95%, 22% 95%);
}
.kind {
	width: 20px;
	height: 20px;
	flex: none;
}
.cname {
	flex: 0 0 102px;
	margin: 0 3px 0 5px;
	overflow: hidden;
	font: bold 14px/18px "Liberation Serif", serif;
	white-space: nowrap;
}
.crow .erf {
	width: 43px;
	height: 28px;
}
.crow input[type=text] {
	flex: 1;
	min-width: 0;
	height: 28px;
	margin: 0 4px;
	padding: 0 0 8px 5px;
	border: 2px solid;
	border-color: var(--lo) var(--hi) var(--hi) var(--lo);
}
.crow .q-btn {
	width: 29px;
	height: 28px;
}
.cbtns {
	display: grid;
	grid-template-columns: repeat(3, 1fr);
	gap: 4px;
	padding: 4px 2px;
}
.cbtns .btn {
	height: 23px;
	font: bold 15px/18px "Liberation Serif", serif;
}
.runs {
	display: flex;
	align-items: center;
	gap: 5px;
	height: 32px;
	padding-left: 2px;
	font: 15px/15px "Liberation Mono", monospace;
}
.runs .btn {
	width: 29px;
	height: 29px;
}
.runs .red svg {
	outline: 1px solid #d81818;
	outline-offset: -3px;
}
.when {
	padding-top: 1px;
	text-align: center;
	margin-right: auto;
}
.bang {
	align-self: stretch;
	display: flex;
	align-items: center;
	margin-left: -4px;
	width: 17px;
	justify-content: center;
	background: #ff1a1a;
	border: solid #000;
	border-width: 1px 0 0 1px;
	font: bold 12px/12px "Liberation Sans", sans-serif;
}
.msg {
	height: 24px;
	padding-left: 2px;
	border: solid #000;
	border-width: 1px 0 3px;
	background: #ffffcc;
	font: 15px/21px "Liberation Mono", monospace;
}
.checks .vbar i {
	margin-top: 220px;
}
.checklist .footer {
	height: 27px;
}

/* measure popup */
.measure {
	right: 0;
	top: 246px;
	width: 184px;
	height: 251px;
}
.modes h3 {
	height: 15px;
	line-height: 16px;
	text-align: center;
}
.modes label {
	display: flex;
	align-items: center;
	gap: 4px;
	height: 29px;
	padding: 0 3px 0 5px;
	border: solid #000;
	border-width: 1px 0 1px 1px;
	white-space: nowrap;
}
input[type=radio] {
	width: 12px;
	height: 12px;
	margin: 0 1px;
	flex: none;
	transform: rotate(45deg);
	border: 2px solid;
	border-color: var(--hi) var(--lo) var(--lo) var(--hi);
}
input[type=radio]:checked {
	background: #c4005c;
	border-color: var(--lo) #fff #fff var(--lo);
}
.popclose {
	margin-top: auto;
	padding: 1px;
	border-top: 1px solid #000;
}
.popclose .btn {
	width: 100%;
	height: 25px;
}

/* results histogram */
.histogram {
	right: 167px;
	top: 452px;
	width: 467px;
	height: 569px;
}
.hmain {
	display: flex;
	gap: 1px;
	height: 290px;
	padding: 4px 5px 0 3px;
}
.stats {
	width: 103px;
	display: flex;
	flex-direction: column;
	border: 1px solid #000;
}
.radios {
	display: flex;
	flex-direction: column;
	height: 136px;
	padding-left: 6px;
	border-bottom: 1px solid #000;
}
.radios label {
	display: flex;
	align-items: center;
	gap: 4px;
	height: 27px;
}
.stats .list {
	padding-top: 2px;
}
.stats .listrow {
	padding: 0 1px;
}
.stats .iconrow .btn, .boardfoot .btn {
	width: 30px;
}
.chartpane {
	flex: 1;
	min-width: 0;
	display: flex;
	flex-direction: column;
	border: 2px solid;
	border-color: var(--lo) var(--hi) var(--hi) var(--lo);
}
.plot {
	display: flex;
	flex-direction: column;
	height: 167px;
	padding: 1px 5px 0;
	border-top: 1px solid #000;
	border-bottom: 4px solid #000;
}
.charttitle {
	align-self: center;
	height: 22px;
	padding: 0 3px;
	border: 1px solid #000;
	background: #b4ffff;
	box-shadow: 2px 2px 0 #6c8c8c;
	font-style: italic;
	line-height: 23px;
}
.bars {
	flex: 1;
	min-height: 0;
	display: flex;
	align-items: flex-end;
}
.bar {
	width: 56px;
	margin-right: -1px;
	background: #ff1a1a;
	border: 1px solid #000;
	border-bottom: 0;
	text-align: center;
}
.bar span {
	display: block;
	margin-top: -17px;
}
.bar.low span {
	color: #e01818;
}
.ticks {
	display: flex;
	padding: 1px 5px 6px;
}
.ticks pre {
	width: 56px;
	height: 29px;
	margin-right: -1px;
	padding: 1px 0 0 18px;
	border: 1px solid #000;
	background: #ff1a1a;
	line-height: 14px;
}
.chartfoot {
	flex: 1;
	min-height: 0;
	display: flex;
	border: solid #000;
	border-width: 2px 2px 2px 0;
}
.chartfoot .listrow {
	flex: 0 0 111px;
	border-right: 1px solid #000;
}
.chartfoot .list {
	padding: 2px 3px;
}
.resolution {
	flex: 1;
	display: flex;
	flex-direction: column;
	padding: 0 3px;
}
.resolution label {
	text-align: center;
	line-height: 20px;
}
.resolution output {
	padding: 2px 0 1px 23px;
	line-height: 20px;
}
#res {
	height: 15px;
	background: var(--tr);
	border: 2px solid;
	border-color: var(--lo) var(--hi) var(--hi) var(--lo);
}
#res::-webkit-slider-thumb {
	appearance: none;
	width: 30px;
	height: 11px;
	background: linear-gradient(90deg, var(--bg) 12px, var(--lo) 12px, var(--lo) 13px, var(--hi) 13px, var(--hi) 14px, var(--bg) 14px);
	border: 2px solid;
	border-color: var(--hi) var(--lo) var(--lo) var(--hi);
}
.sash {
	height: 10px;
	display: flex;
	justify-content: flex-end;
	padding-right: 10px;
	background: linear-gradient(transparent 4px, var(--lo) 4px, var(--lo) 5px, var(--hi) 5px, var(--hi) 6px, transparent 6px);
}
.sash i {
	width: 9px;
	height: 9px;
	background: var(--bg);
	border: 2px solid;
	border-color: var(--hi) var(--lo) var(--lo) var(--hi);
}
.board {
	flex: 1;
	min-height: 0;
	display: flex;
	justify-content: center;
	margin: 0 4px 2px;
	padding-top: 18px;
	border: 2px solid;
	border-color: var(--lo) var(--hi) var(--hi) var(--lo);
	outline: 1px solid #000;
	outline-offset: -2px;
}
.board svg {
	width: 40px;
	height: 123px;
}
.boardfoot {
	display: flex;
	gap: 4px;
	padding: 0 5px 2px;
	background: #54cfb0;
}
.boardfoot .btn {
	margin: 2px 0;
	height: 38px;
}
.boardfoot .btn:nth-child(n+4) {
	width: 38px;
}
.btn svg.tile {
	width: 30px;
	height: 34px;
}
.summary {
	flex: 1;
	padding-left: 2px;
	border: 1px solid #000;
	background: #9cdcdc;
	line-height: 41px;
}
.histogram .footer {
	border-top: 1px solid #000;
}
.histogram .footer .btn {
	height: 24px;
}

/* input method bar */
.ime {
	position: absolute;
	right: 126px;
	bottom: 3px;
	height: 24px;
	display: flex;
	align-items: center;
	gap: 7px;
	padding-right: 6px;
	background: #fff;
	border: 1px solid #b8c0c8;
	fill: #3c4a60;
	color: #3c4a60;
	font: bold 15px/20px "Noto Sans CJK SC", sans-serif;
}
.ime svg {
	width: 15px;
	height: 15px;
}
.ime .sogou {
	width: 28px;
	height: 28px;
	margin: -4px 0 0 -3px;
}
```

FILE: script.js
```js
// name, row colour class, has hand marker
var groups = [
	[["to", "c-wh", 1], ["ts", "c-gr", 1], ["cs", "c-or", 1], ["sig2t", "c-or", 1], ["sig3b", "c-or", 1], ["ss", "c-or", 1], ["bs", "c-gr", 1], ["bo", "c-wh", 1]],
	[["drl", "c-dr", 0], ["rout", "c-ro", 0]],
	[["tp", "", 1], ["bp", "", 1], ["dd", "", 1], ["outline", "", 1], ["hydd", "", 0], ["ydkdrl", "", 0], ["npth", "", 0], ["datecode-pbc", "", 0], ["cvia", "", 0], ["cs2", "", 0], ["ss2", "", 0], ["ts1", "", 0], ["bs1", "", 0], ["dwk", "", 0], ["dwkby", "", 0], ["auto_chk_pnl", "", 0], ["biaozhu", "", 0], ["fzkdrl", "", 0], ["d", "", 0], ["to.d", "", 1], ["ts.d", "", 1], ["cs.d", "", 1], ["sig2t.d", "", 1], ["sig3b.d", "", 1], ["ss.d", "", 1], ["bs.d", "", 1], ["bo.d", "", 1], ["drl.d", "", 0], ["rout.d", "", 0], ["bp.d", "", 1], ["dd.d", "", 1], ["outline.d", "", 1], ["tp.d", "", 1], ["0", "", 0]]
];
var swatches = { ts: "#459a00", cs: "#ff0000" };

document.getElementById("layers").innerHTML = groups.map(function (rows) {
	return '<div class="group">' + rows.map(function (r) {
		return '<label class="layer"><input type="checkbox"' + (r[0] == "ts" ? " checked" : "") + '>' +
			'<span class="swatch" style="background:' + (swatches[r[0]] || "#000") + '"></span>' +
			'<span class="lname ' + r[1] + '"><span>' + r[0] + '</span>' +
			(r[2] ? '<svg><use href="#i-hand"/></svg>' : '') +
			(r[0] == "ts" ? '<svg class="g"><use href="#i-grid"/></svg>' : '') +
			'</span></label>';
	}).join("") + '</div>';
}).join("");

var checks = [
	{ name: "Signal Layer Checks", icon: "signal", erf: "Inner", took: "0:00:03", msg: "2 layers were processed" },
	{ name: "Power/Ground Checks", icon: "power", erf: "Inner", took: "0:00:00", msg: "No power/ground layers" },
	{ name: "Signal Layer Checks", icon: "signal", erf: "Outer", took: "0:00:02", msg: "2 layers were processed" },
	{ name: "Solder Mask Checks", icon: "signal", erf: "Soldermask", took: "0:00:02", msg: "2 solder mask layers were processed" },
	{ name: "Silk Screen Checks", icon: "signal", erf: "Silkscreen", took: "0:00:01", msg: "2 silk screen layers processed" }
];

document.getElementById("checks").innerHTML = checks.map(function (c) {
	return '<div class="check"><div class="crow"><input type="checkbox" checked aria-label="' + c.name + '">' +
		'<svg class="kind"><use href="#i-' + c.icon + '"/></svg><span class="cname">' + c.name + '</span>' +
		'<button class="btn erf">ERF:</button><input type="text" aria-label="ERF" value="' + c.erf + '">' +
		'<button class="btn q-btn" aria-label="Help"><svg><use href="#i-help"/></svg></button></div>' +
		'<div class="cbtns"><button class="btn">Parameters...</button><button class="btn">Ranges...</button><button class="btn">Online...</button></div>' +
		'<div class="runs"><button class="btn green" aria-label="Run"><svg><use href="#i-run"/></svg></button>' +
		'<button class="btn green" aria-label="Run local"><svg><use href="#i-run"/></svg></button>' +
		'<button class="btn green red" aria-label="Run area"><svg><use href="#i-run"/></svg></button>' +
		'<div class="when">01 Feb 2023<br>10:05 PM - ' + c.took + '</div>' +
		'<button class="btn green" aria-label="View results"><svg><use href="#i-zoom"/></svg></button><span class="bang">!!</span></div>' +
		'<div class="msg">' + c.msg + '</div></div>';
}).join("");
```
